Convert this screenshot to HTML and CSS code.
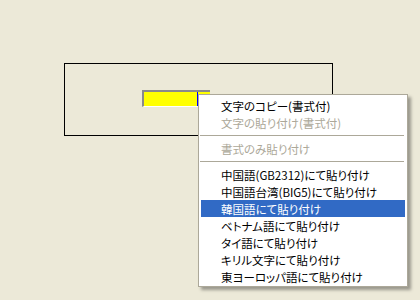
FILE: index.html
```html
<!DOCTYPE html>
<html lang="ja">
<head>
  <meta charset="UTF-8" />
  <title>貼り付けメニュー</title>
  <link rel="stylesheet" href="styles.css">
</head>
<body>
  <div class="frame">
    <div class="field"><span class="caret"></span></div>
  </div>

  <ul class="menu">
    <li class="item">文字のコピー(書式付)</li>
    <li class="item disabled">文字の貼り付け(書式付)</li>
    <li class="sep"></li>
    <li class="item disabled">書式のみ貼り付け</li>
    <li class="sep"></li>
    <li class="item">中国語(GB2312)にて貼り付け</li>
    <li class="item">中国語台湾(BIG5)にて貼り付け</li>
    <li class="item active">韓国語にて貼り付け</li>
    <li class="item">ベトナム語にて貼り付け</li>
    <li class="item">タイ語にて貼り付け</li>
    <li class="item">キリル文字にて貼り付け</li>
    <li class="item">東ヨーロッパ語にて貼り付け</li>
  </ul>
</body>
</html>
```

FILE: styles.css
```css
html, body {
  margin: 0;
  height: 100%;
}
body {
  background-color: #ece9d8;
  font-family: "Noto Sans CJK JP", "Liberation Sans", sans-serif;
  font-size: 12px;
  padding: 63px 0 0 64px;
  box-sizing: border-box;
  overflow: hidden;
}
.frame {
  width: 190px;
  height: 45px;
  border: 1px solid #000;
  padding: 26px 0 0 77px;
}
.field {
  width: 66px;
  height: 14px;
  background-color: #ffff00;
  border-top: 2px solid #8a8a8a;
  border-left: 2px solid #8a8a8a;
  border-bottom: 1px solid #ffffff;
  display: flex;
}
.caret {
  display: block;
  width: 1px;
  height: 14px;
  margin-left: 53px;
  background-color: #0000ff;
}
.menu {
  position: absolute;
  left: 198px;
  top: 94px;
  width: 208px;
  margin: 0;
  padding: 2px 0 1px;
  list-style: none;
  background-color: #ffffff;
  border: 1px solid #aca899;
  box-shadow: 3px 3px 3px rgba(0, 0, 0, 0.35);
}
.item {
  height: 17px;
  line-height: 18px;
  padding: 0 0 0 20px;
  margin: 0 2px;
  color: #000;
  font-size: 11.5px;
  white-space: nowrap;
  font-feature-settings: "palt";
}
.item.disabled {
  color: #aca899;
}
.item.active {
  background-color: #316ac5;
  color: #ffffff;
}
.sep {
  height: 9px;
  display: flex;
  align-items: center;
  padding: 0 3px 0 1px;
}
.sep::before {
  content: "";
  flex: 1;
  height: 1px;
  background-color: #aca899;
}
```
